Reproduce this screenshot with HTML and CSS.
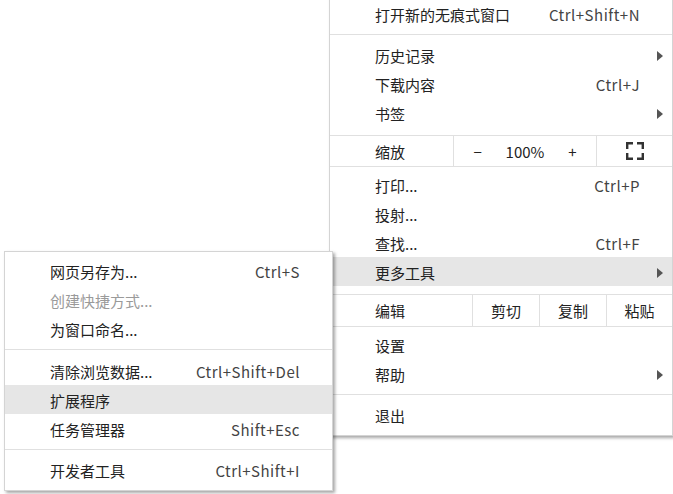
FILE: index.html
```html
<!doctype html>
<html lang="zh-CN">
<head>
    <meta charset="UTF-8">
    <meta name="viewport" content="width=device-width, initial-scale=1.0">
    <title>更多工具</title>
    <link rel="stylesheet" href="styles.css">
</head>
<body>

<!-- Main browser menu -->
<div class="menu main-menu">
    <div class="group">
        <div class="item"><span class="label">打开新的无痕式窗口</span><span class="shortcut">Ctrl+Shift+N</span></div>
    </div>
    <div class="group group-history">
        <div class="item"><span class="label">历史记录</span><span class="arrow"></span></div>
        <div class="item"><span class="label">下载内容</span><span class="shortcut">Ctrl+J</span></div>
        <div class="item"><span class="label">书签</span><span class="arrow"></span></div>
    </div>
    <div class="group row-zoom">
        <div class="cell cell-label">缩放</div>
        <div class="cell zoom-controls">
            <span class="zoom-btn">−</span>
            <span class="zoom-btn">100%</span>
            <span class="zoom-btn">+</span>
        </div>
        <div class="cell fullscreen">
            <svg width="18" height="18" viewBox="0 0 18 18">
                <path d="M1.2 7V1.2H7 M11 1.2h5.8V7 M16.8 11v5.8H11 M7 16.8H1.2V11" fill="none" stroke="#333" stroke-width="2.4"/>
            </svg>
        </div>
    </div>
    <div class="group group-tools">
        <div class="item"><span class="label">打印...</span><span class="shortcut">Ctrl+P</span></div>
        <div class="item"><span class="label">投射...</span></div>
        <div class="item"><span class="label">查找...</span><span class="shortcut">Ctrl+F</span></div>
        <div class="item active"><span class="label">更多工具</span><span class="arrow"></span></div>
    </div>
    <div class="group row-edit">
        <div class="cell cell-label">编辑</div>
        <div class="cell edit-btn">剪切</div>
        <div class="cell edit-btn">复制</div>
        <div class="cell edit-btn">粘贴</div>
    </div>
    <div class="group group-settings">
        <div class="item"><span class="label">设置</span></div>
        <div class="item"><span class="label">帮助</span><span class="arrow"></span></div>
    </div>
    <div class="group">
        <div class="item"><span class="label">退出</span></div>
    </div>
</div>

<!-- "More tools" submenu -->
<div class="menu sub-menu">
    <div class="group group-save">
        <div class="item"><span class="label">网页另存为...</span><span class="shortcut">Ctrl+S</span></div>
        <div class="item disabled"><span class="label">创建快捷方式...</span></div>
        <div class="item"><span class="label">为窗口命名...</span></div>
    </div>
    <div class="group group-data">
        <div class="item"><span class="label">清除浏览数据...</span><span class="shortcut">Ctrl+Shift+Del</span></div>
        <div class="item active"><span class="label">扩展程序</span></div>
        <div class="item"><span class="label">任务管理器</span><span class="shortcut">Shift+Esc</span></div>
    </div>
    <div class="group">
        <div class="item"><span class="label">开发者工具</span><span class="shortcut">Ctrl+Shift+I</span></div>
    </div>
</div>

</body>
</html>
```

FILE: styles.css
```css
body {
    margin: 0;
    background: #fff;
    font-family: "Noto Sans CJK SC", sans-serif;
    font-size: 15px;
    color: #222;
    overflow: hidden;
}
.menu {
    position: absolute;
    box-sizing: border-box;
    background: #fff;
    border: 1px solid #d4d4d4;
    box-shadow: 2px 2px 3px rgba(0, 0, 0, 0.35);
}
.main-menu {
    left: 329px;
    top: -7px;
    width: 344px;
}
.sub-menu {
    left: 4px;
    top: 251px;
    width: 329px;
}
.group {
    padding: 5px 0 6px;
}
.group + .group {
    border-top: 1px solid #e0e0e0;
}
.group-history {
    padding: 5px 0 8px;
}
.group-tools {
    padding: 3px 0 8px;
}
.group-settings {
    padding: 3px 0 6px;
}
.group-save {
    padding: 4px 0 6px;
}
.group-data {
    padding: 6px 0 6px;
}
.item {
    display: flex;
    align-items: center;
    box-sizing: border-box;
    height: 29px;
    padding: 3px 9px 0 45px;
    line-height: 26px;
}
.item .label {
    flex: 1;
}
.item.active {
    background: #e6e6e6;
}
.item.disabled {
    color: #9a9a9a;
}
.shortcut {
    margin-right: 23px;
    color: #444;
    letter-spacing: 0.5px;
}
.arrow {
    width: 0;
    height: 0;
    border-top: 5px solid transparent;
    border-bottom: 5px solid transparent;
    border-left: 6px solid #555;
}
.row-zoom,
.row-edit {
    display: flex;
    padding: 0;
}
.row-zoom {
    height: 30px;
}
.row-edit {
    height: 31px;
}
.cell {
    display: flex;
    align-items: center;
    justify-content: center;
    box-sizing: border-box;
    border-left: 1px solid #e0e0e0;
}
.cell-label {
    flex: 1;
    justify-content: flex-start;
    padding-left: 45px;
    border-left: none;
}
.zoom-controls {
    width: 143px;
}
.zoom-btn {
    flex: 1;
    text-align: center;
}
.fullscreen {
    width: 76px;
}
.edit-btn {
    width: 67px;
}
.edit-btn:last-child {
    width: 66px;
}
```
